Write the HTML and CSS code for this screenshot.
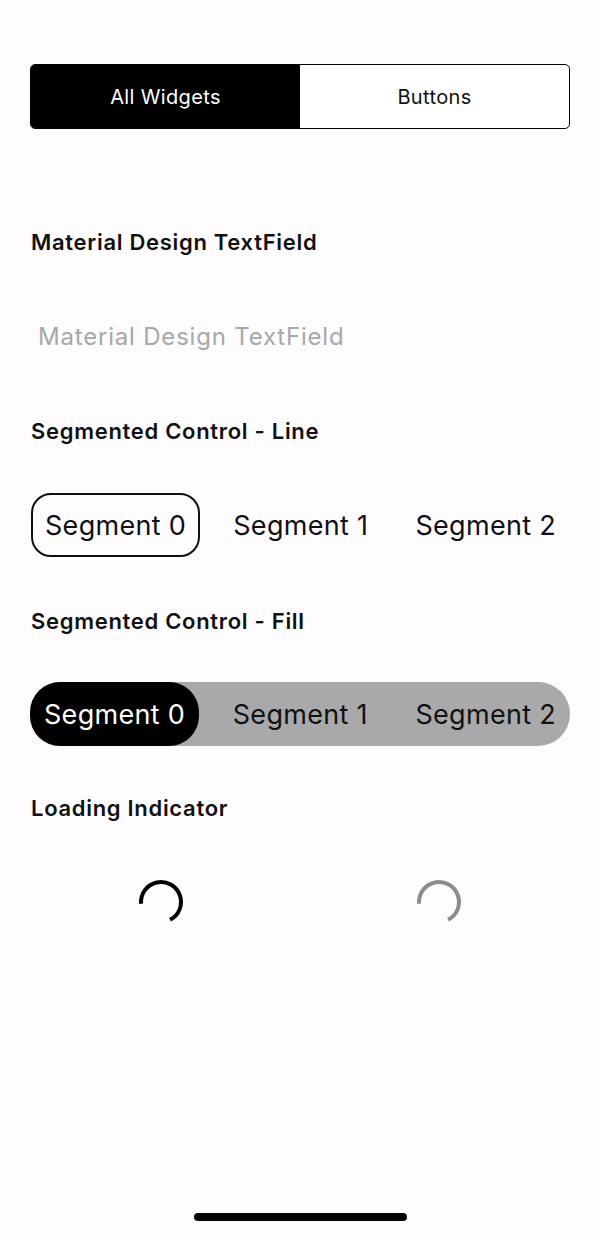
FILE: index.html
```html
<!DOCTYPE html>
<html>
<head>
<meta charset="utf-8">
<link rel="stylesheet" href="styles.css">
</head>
<body>
<div class="page">
  <div class="tabs">
    <div class="tab tab-active">All Widgets</div>
    <div class="tab">Buttons</div>
  </div>

  <h2 class="heading h-first">Material Design TextField</h2>
  <div class="textfield">Material Design TextField</div>

  <h2 class="heading h-after-field">Segmented Control - Line</h2>
  <div class="seg-line">
    <div class="seg seg-line-active">Segment 0</div>
    <div class="seg">Segment 1</div>
    <div class="seg">Segment 2</div>
  </div>

  <h2 class="heading h-after-seg">Segmented Control - Fill</h2>
  <div class="seg-fill">
    <div class="seg seg-fill-active">Segment 0</div>
    <div class="seg">Segment 1</div>
    <div class="seg">Segment 2</div>
  </div>

  <h2 class="heading h-after-fill">Loading Indicator</h2>
  <div class="spinners">
    <svg class="spinner" viewBox="0 0 48 48" width="48" height="48">
      <path d="M4.08 25.74 A20 20 0 1 1 33.08 41.82" fill="none" stroke="#000" stroke-width="4"/>
    </svg>
    <svg class="spinner" viewBox="0 0 48 48" width="48" height="48">
      <path d="M4.08 25.74 A20 20 0 1 1 33.08 41.82" fill="none" stroke="#8c8c8c" stroke-width="4"/>
    </svg>
  </div>

  <div class="home-indicator"></div>
</div>
</body>
</html>
```
FILE: styles.css
```css
html, body {
  margin: 0;
  padding: 0;
  background: #fefcfe;
}
body {
  font-family: Inter, "Noto Sans", sans-serif;
  color: #000;
}
.page {
  min-height: 1233px;
  box-sizing: border-box;
  padding: 64px 30px 0;
  display: flex;
  flex-direction: column;
}
.tabs {
  display: flex;
  height: 65px;
  box-sizing: border-box;
  border: 1.5px solid #000;
  border-radius: 5px;
  overflow: hidden;
  background: #fff;
}
.tab {
  flex: 1;
  display: flex;
  align-items: center;
  justify-content: center;
  font-size: 20px;
  letter-spacing: 0.35px;
  color: #111;
}
.tab-active {
  background: #000;
  color: #fff;
}
.heading {
  margin: 0;
  font-size: 22px;
  font-weight: 600;
  letter-spacing: 0.7px;
  line-height: 28px;
  height: 28px;
  color: #111;
  padding-left: 1px;
}
.h-first { margin-top: 99px; }
.h-after-field { margin-top: 60px; }
.h-after-seg { margin-top: 50px; }
.h-after-fill { margin-top: 48px; }
.textfield {
  margin-top: 61px;
  height: 40px;
  line-height: 40px;
  font-size: 24px;
  letter-spacing: 0.8px;
  color: #a8a7a9;
  padding-left: 8px;
}
.seg-line, .seg-fill {
  display: flex;
  justify-content: space-between;
  margin-top: 48px;
  height: 64px;
  box-sizing: border-box;
}
.seg {
  display: flex;
  align-items: center;
  justify-content: center;
  padding: 0 12px;
  font-size: 27px;
  letter-spacing: 0.3px;
  color: #111;
  box-sizing: border-box;
  border: 2px solid transparent;
  border-radius: 20px;
}
.seg-line-active {
  border-color: #111;
  margin-left: 1px;
}
.seg-fill {
  background: #a9a8ab;
  border-radius: 32px;
  margin-top: 47px;
}
.seg-fill .seg {
  border: none;
  padding: 0 14px;
}
.seg-fill-active {
  background: #000;
  color: #fff !important;
  border-radius: 30px !important;
}
.spinners {
  margin-top: 56px;
  display: flex;
  padding-left: 107px;
  gap: 230px;
}
.spinner {
  display: block;
}
.home-indicator {
  margin: auto auto 12px;
  width: 213px;
  height: 8px;
  border-radius: 4px;
  background: #000;
  position: relative;
  left: 0.5px;
}
```
